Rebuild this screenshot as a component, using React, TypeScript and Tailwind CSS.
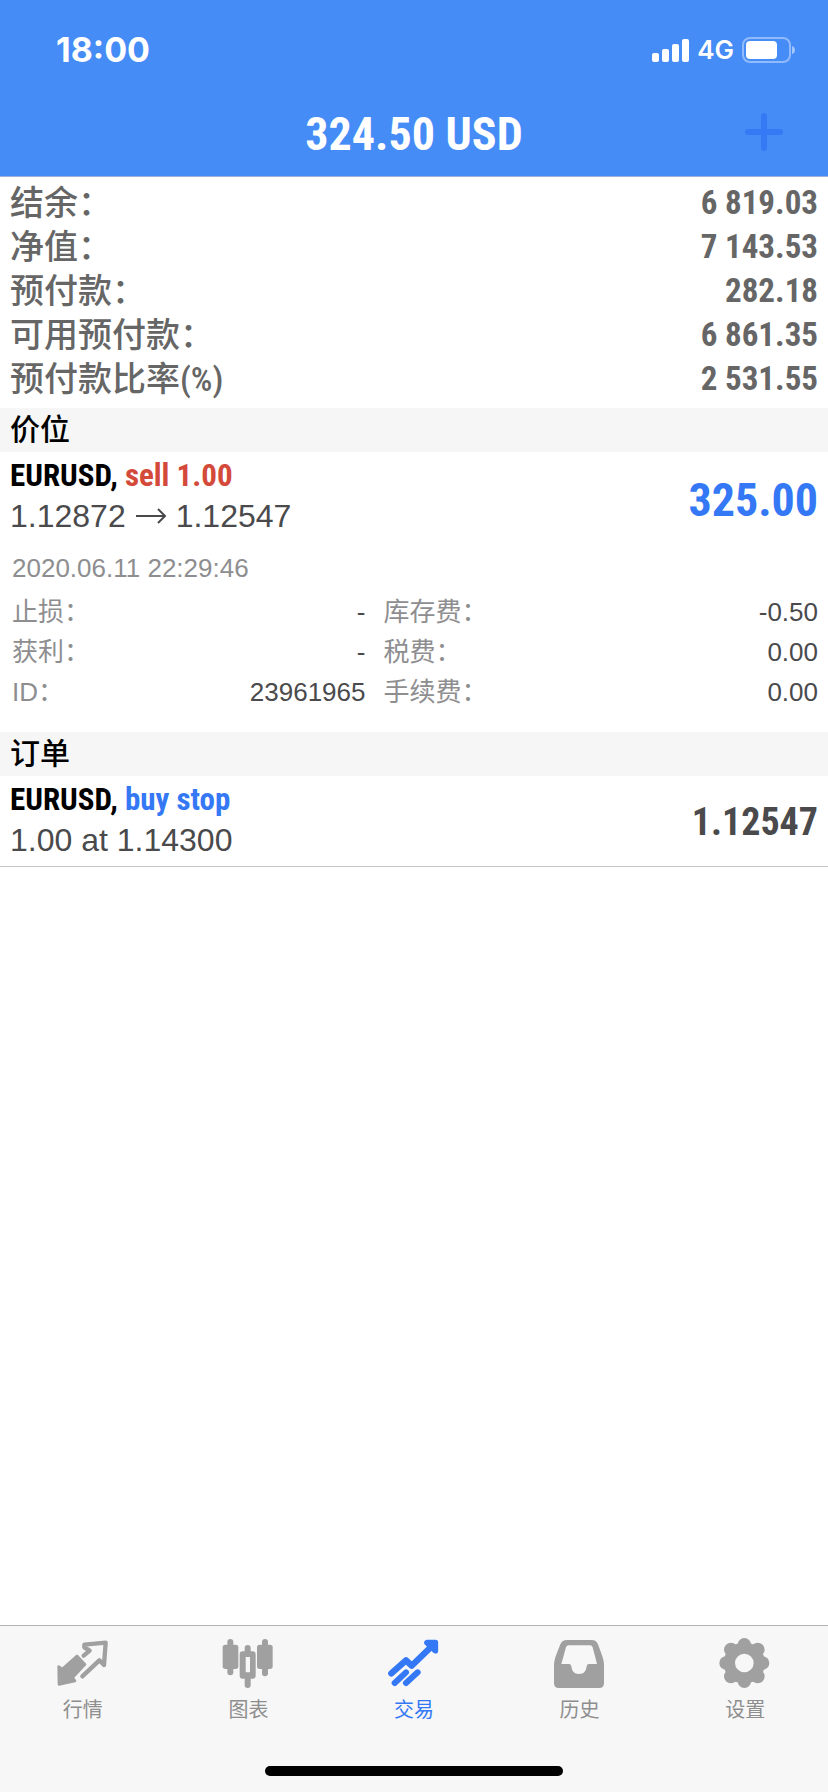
import React, { useState } from 'react';

const summary = [
    { label: '结余：', value: '6 819.03' },
    { label: '净值：', value: '7 143.53' },
    { label: '预付款：', value: '282.18' },
    { label: '可用预付款：', value: '6 861.35' },
    { label: '预付款比率(%)', value: '2 531.55' },
];

const details = [
    ['止损：', '-', '库存费：', '-0.50'],
    ['获利：', '-', '税费：', '0.00'],
    ['ID：', '23961965', '手续费：', '0.00'],
];

const condensed = "font-['Liberation_Sans_Narrow','Roboto_Condensed','Liberation_Sans','Noto_Sans_CJK_SC',sans-serif]";

const QuotesIcon = () => (
    <svg className="w-[52px] h-14" viewBox="0 0 156 168" fill="none" stroke="currentColor" strokeLinejoin="round" strokeLinecap="round" aria-hidden="true">
        <path d="M5 92L16 99L60 60L84 85L47 125L54 135L6 145Z" fill="currentColor" strokeWidth="8" />
        <path d="M80 59L98 44L82 34V26L146 20L141 87L127 73L76 121" strokeWidth="13" />
    </svg>
);

const ChartIcon = () => (
    <svg className="w-[52px] h-14" viewBox="0 0 156 168" fill="currentColor" aria-hidden="true">
        <rect x="2" y="26" width="47" height="73" rx="8" />
        <rect x="16" y="9" width="18" height="109" rx="9" />
        <rect x="105" y="26" width="47" height="73" rx="8" />
        <rect x="120" y="9" width="18" height="112" rx="9" />
        <path fillRule="evenodd" d="M68 46V36a9 9 0 0 1 18 0V46H92a9 9 0 0 1 9 9V119a9 9 0 0 1-9 9H86V147a9 9 0 0 1-18 0V128H62a9 9 0 0 1-9-9V55a9 9 0 0 1 9-9ZM71 63V109H84V63Z" />
    </svg>
);

const TradeIcon = () => (
    <svg className="w-[52px] h-14" viewBox="0 0 156 168" fill="none" stroke="currentColor" strokeLinecap="round" strokeLinejoin="round" aria-hidden="true">
        <path d="M10 112L54 73L71 89L136 26" strokeWidth="19" />
        <path d="M117 20H142V44Z" fill="currentColor" strokeWidth="17" />
        <path d="M20 141L54 109M54 141L89 109" strokeWidth="18" />
    </svg>
);

const HistoryIcon = () => (
    <svg className="w-[52px] h-14" viewBox="0 0 156 168" fill="currentColor" aria-hidden="true">
        <path fillRule="evenodd" d="M39 12H113Q127 12 132 25L145 61Q150 76 150 86V142Q150 156 136 156H14Q0 156 0 142V86Q0 76 5 61L19 25Q24 12 39 12ZM44 28Q38 28 36 34L22 84H45Q51 84 52 91C54 107 61 114 75 114S96 107 98 91Q99 84 105 84H129L116 34Q114 28 108 28Z" />
    </svg>
);

const SettingsIcon = () => (
    <svg className="w-[52px] h-14" viewBox="0 0 156 168" fill="currentColor" aria-hidden="true">
        <path fillRule="evenodd" d="M76 19A62 62 0 1 0 76 143A62 62 0 1 0 76 19ZM76 53A28 28 0 1 1 76 109A28 28 0 1 1 76 53Z" />
        <circle cx="76" cy="26" r="20" />
        <circle cx="76" cy="136" r="20" />
        <circle cx="21" cy="81" r="20" />
        <circle cx="131" cy="81" r="20" />
        <circle cx="36" cy="41" r="21" />
        <circle cx="116" cy="41" r="21" />
        <circle cx="36" cy="121" r="21" />
        <circle cx="116" cy="121" r="21" />
    </svg>
);

const tabs = [
    { label: '行情', Icon: QuotesIcon },
    { label: '图表', Icon: ChartIcon },
    { label: '交易', Icon: TradeIcon },
    { label: '历史', Icon: HistoryIcon },
    { label: '设置', Icon: SettingsIcon },
];

const StatusBar = () => (
    <div className="flex h-[100px] items-center justify-between pl-14 pr-8 text-white">
        <span className="font-['Inter',sans-serif] text-[34px] font-bold leading-10">18:00</span>
        <div className="flex items-center gap-2">
            <svg className="h-6 w-[37px]" viewBox="0 0 37 24" fill="currentColor" aria-hidden="true">
                <rect x="0" y="15" width="7" height="9" rx="2" />
                <rect x="10" y="11" width="7" height="13" rx="2" />
                <rect x="20" y="6" width="7" height="18" rx="2" />
                <rect x="30" y="1" width="7" height="23" rx="2" />
            </svg>
            <span className="font-['Inter',sans-serif] text-[26px] font-semibold leading-8">4G</span>
            <svg className="h-[26px] w-[54px]" viewBox="0 0 54 26" fill="none" aria-hidden="true">
                <rect x="1" y="1" width="47" height="24" rx="7" stroke="white" strokeOpacity="0.4" strokeWidth="2" />
                <rect x="4" y="4" width="31" height="18" rx="4" fill="white" />
                <path d="M50 9Q53 10 53 13T50 17Z" fill="white" fillOpacity="0.5" />
            </svg>
        </div>
    </div>
);

const SectionTitle = ({ children }: { children: React.ReactNode }) => (
    <h2 className="flex h-11 items-center bg-[#f6f6f6] px-[10px] text-[30px] font-medium leading-[46px] text-black">
        {children}
    </h2>
);

const App: React.FC = () => {
    const [active, setActive] = useState('交易');

    return (
        <div className="flex min-h-screen flex-col bg-white font-['Liberation_Sans','Noto_Sans_CJK_SC',sans-serif] text-[#4a4a4c]">
            <header className="border-b border-[#9fb0d8] bg-[#468cf7]">
                <StatusBar />
                <div className="grid h-[76px] grid-cols-[1fr_auto_1fr] items-start">
                    <h1 className={`${condensed} col-start-2 text-[46px] font-bold leading-[68px] text-white`}>
                        324.50 USD
                    </h1>
                    <button type="button" aria-label="新订单" className="mr-11 mt-3 justify-self-end text-[#3579f5]">
                        <svg className="h-10 w-10" viewBox="0 0 40 40" stroke="currentColor" strokeWidth="6" strokeLinecap="round" aria-hidden="true">
                            <path d="M20 4V36M4 20H36" />
                        </svg>
                    </button>
                </div>
            </header>

            <main className="flex-grow">
                <table className="mb-[7px] mt-1 w-full text-[#666666]">
                    <tbody>
                        {summary.map((row) => (
                            <tr key={row.label} className="h-11">
                                <th scope="row" className={`${condensed} p-0 pl-[10px] text-left text-[34px] font-medium leading-[44px]`}>
                                    {row.label}
                                </th>
                                <td className={`${condensed} p-0 pr-[10px] text-right text-[33px] font-bold leading-[44px]`}>
                                    {row.value}
                                </td>
                            </tr>
                        ))}
                    </tbody>
                </table>

                <SectionTitle>价位</SectionTitle>
                <section className="px-[10px] pb-5 pt-1">
                    <div className="flex items-center justify-between">
                        <div>
                            <p className={`${condensed} text-[31px] font-bold leading-10 text-black`}>
                                EURUSD, <span className="text-[#d44a3a]">sell 1.00</span>
                            </p>
                            <p className="flex items-center gap-[9px] text-[32px] leading-10">
                                <span>1.12872</span>
                                <svg className="h-4 w-8" viewBox="0 0 32 16" fill="none" stroke="currentColor" strokeWidth="2" role="img" aria-label="→">
                                    <path d="M1 8H30M23 1L30 8L23 15" />
                                </svg>
                                <span>1.12547</span>
                            </p>
                        </div>
                        <strong className={`${condensed} self-end text-[46px] leading-[72px] text-[#3478f6]`}>325.00</strong>
                    </div>
                    <p className="mt-3 px-[2px] text-[26px] leading-10 text-[#8e8e90]">2020.06.11 22:29:46</p>
                    <table className="mt-1 w-full table-fixed text-[26px] leading-10">
                        <colgroup>
                            <col className="w-[11%]" />
                            <col className="w-[33%]" />
                            <col className="w-[15%]" />
                            <col className="w-[41%]" />
                        </colgroup>
                        <tbody>
                            {details.map(([leftLabel, leftValue, rightLabel, rightValue]) => (
                                <tr key={leftLabel} className="h-10">
                                    <th scope="row" className="whitespace-nowrap p-0 pl-[2px] text-left font-normal text-[#8e8e90]">{leftLabel}</th>
                                    <td className="p-0 text-right">{leftValue}</td>
                                    <th scope="row" className="whitespace-nowrap p-0 pl-[18px] text-left font-normal text-[#8e8e90]">{rightLabel}</th>
                                    <td className="p-0 text-right">{rightValue}</td>
                                </tr>
                            ))}
                        </tbody>
                    </table>
                </section>

                <SectionTitle>订单</SectionTitle>
                <section className="flex items-center justify-between border-b border-[#c4c4c6] px-[10px] pb-[6px] pt-1">
                    <div>
                        <p className={`${condensed} text-[31px] font-bold leading-10 text-black`}>
                            EURUSD, <span className="text-[#3478f6]">buy stop</span>
                        </p>
                        <p className="text-[32px] leading-10">1.00 at 1.14300</p>
                    </div>
                    <strong className={`${condensed} self-end text-[38px] leading-[76px]`}>1.12547</strong>
                </section>
            </main>

            <nav className="border-t border-[#b2b2b2] bg-[#f7f7f7] pb-4 pt-[10px]">
                <div className="grid grid-cols-5">
                    {tabs.map(({ label, Icon }) => (
                        <button
                            key={label}
                            type="button"
                            aria-pressed={active === label}
                            onClick={() => setActive(label)}
                            className={`flex flex-col items-center ${active === label ? 'text-[#3478f6]' : 'text-[#a0a0a0]'}`}
                        >
                            <Icon />
                            <span className={`text-xl leading-9 ${active === label ? 'text-[#3478f6]' : 'text-[#8e8e8e]'}`}>{label}</span>
                        </button>
                    ))}
                </div>
                <div className="mx-auto mt-[38px] h-[10px] w-[36%] rounded-full bg-black" />
            </nav>
        </div>
    );
};

export default App;
